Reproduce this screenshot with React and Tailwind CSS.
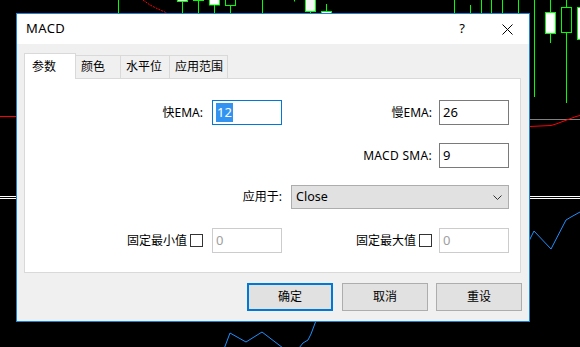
import React from 'react';

const font = "font-['Noto_Sans','Noto_Sans_CJK_SC',sans-serif]";

function ChartBackground() {
  const green = '#00ff00';
  return (
    <svg className="absolute inset-0" width="580" height="347" viewBox="0 0 580 347">
      <rect width="580" height="347" fill="#000" />
      {/* top strip */}
      <line x1="118.5" y1="0" x2="118.5" y2="14" stroke={green} />
      <path d="M143 0 L150 5 L158 9 L167 13" stroke="#ff0000" fill="none" strokeDasharray="2 1" />
      <line x1="182.5" y1="0" x2="182.5" y2="14" stroke={green} />
      <rect x="177.5" y="-2" width="10" height="3.5" fill="#fff" stroke={green} />
      <line x1="198.5" y1="0" x2="198.5" y2="14" stroke={green} />
      <line x1="193" y1="0.5" x2="204" y2="0.5" stroke={green} />
      <line x1="214.5" y1="0" x2="214.5" y2="14" stroke={green} />
      <rect x="209.5" y="-2" width="10" height="7" fill="#fff" stroke={green} />
      <line x1="230.5" y1="5" x2="230.5" y2="14" stroke={green} />
      <rect x="225.5" y="-2" width="10" height="7.5" fill="#000" stroke={green} />
      <line x1="262.5" y1="0" x2="262.5" y2="14" stroke={green} />
      <line x1="294.5" y1="0" x2="294.5" y2="1.5" stroke={green} />
      <line x1="310.5" y1="0" x2="310.5" y2="14" stroke={green} />
      <rect x="305.5" y="-2" width="10" height="13.5" fill="#f4f4f4" stroke={green} />
      <line x1="326.5" y1="4" x2="326.5" y2="12" stroke={green} />
      <rect x="321.5" y="11.5" width="10" height="4" fill="#fff" stroke={green} />
      <line x1="454.5" y1="0" x2="454.5" y2="14" stroke={green} />
      <line x1="470.5" y1="5" x2="470.5" y2="14" stroke={green} />
      <line x1="481.5" y1="0" x2="481.5" y2="14" stroke={green} />
      <line x1="491.5" y1="0" x2="491.5" y2="14" stroke={green} />
      <line x1="502.5" y1="0" x2="502.5" y2="14" stroke={green} />
      <line x1="518.5" y1="0" x2="518.5" y2="14" stroke={green} />
      {/* right strip */}
      <line x1="534.5" y1="0" x2="534.5" y2="97" stroke={green} />
      <line x1="550.5" y1="0" x2="550.5" y2="43" stroke={green} />
      <rect x="545.5" y="12.5" width="10" height="21" fill="#fff" stroke={green} />
      <line x1="566.5" y1="0" x2="566.5" y2="103" stroke={green} />
      <rect x="561.5" y="7.5" width="10" height="25" fill="#000" stroke={green} />
      <line x1="582.5" y1="0" x2="582.5" y2="50" stroke={green} />
      <rect x="577.5" y="7.5" width="10" height="32" fill="#fff" stroke={green} />
      <line x1="529" y1="119.5" x2="580" y2="119.5" stroke="#808080" />
      <path d="M529 126.5 L551 125.5 L556 124 L560 122.5 L564 121 L568 119.5 L572 118 L576 116.5 L580 115.5" stroke="#ff0000" fill="none" strokeWidth="1" />
      <line x1="0" y1="116.5" x2="17" y2="116.5" stroke="#ff0000" />
      <line x1="0" y1="196.5" x2="580" y2="196.5" stroke="#fff" />
      <line x1="0" y1="198.5" x2="580" y2="198.5" stroke="#fff" />
      <path d="M529 241 L534 231 L551 249 L566 220 L571 217 L580 212" stroke="#1e90ff" fill="none" />
      {/* bottom */}
      <path d="M224 349 L230 333 L246 342 L262 332 L283 348" stroke="#1e90ff" fill="none" />
      <path d="M299 348 L303 343 L308 340 L311 334 L317 318" stroke="#1e90ff" fill="none" />
    </svg>
  );
}

function TextBox({ value, focused, disabled }) {
  const border = focused ? 'border-[#0078d7]' : disabled ? 'border-[#cccccc]' : 'border-[#7a7a7a]';
  return (
    <div className={`w-[70px] h-[25px] border ${border} bg-white flex items-center pl-[3px] text-[13px] ${disabled ? 'text-[#a0a0a0]' : 'text-black'}`}>
      {focused ? <span className="bg-[#3393f0] text-white leading-[19px] px-px">{value}</span> : <span>{value}</span>}
    </div>
  );
}

function Checkbox() {
  return <span className="inline-block w-[13px] h-[13px] border border-[#333] bg-white ml-[3px]"></span>;
}

function Button({ children, primary, className = '' }) {
  return (
    <button
      className={`w-[86px] h-[28px] bg-[#e1e1e1] text-[12px] text-black flex items-center justify-center ${
        primary ? 'border-2 border-[#0078d7]' : 'border border-[#adadad]'
      } ${className}`}
    >
      {children}
    </button>
  );
}

export default function App() {
  return (
    <div className={`relative w-[580px] h-[347px] overflow-hidden bg-black ${font}`}>
      <ChartBackground />

      <div className="absolute left-[16px] top-[13px] w-[514px] h-[309px] border border-[#1883d7] bg-[#f0f0f0] flex flex-col">
        {/* title bar */}
        <div className="h-[30px] bg-white flex items-center text-black">
          <span className="pl-[9px] text-[13px] tracking-[0.4px]">MACD</span>
          <span className="ml-auto mr-[37px] text-[13px]">?</span>
          <svg width="11" height="11" viewBox="0 0 11 11" className="mr-[16px]">
            <path d="M0.5 0.5 L10.5 10.5 M10.5 0.5 L0.5 10.5" stroke="#000" strokeWidth="1" />
          </svg>
        </div>

        {/* body */}
        <div className="flex-1 pt-[9px] px-[7px] text-[12px] text-black">
          <div className="flex items-end h-[25px]">
            <div className="relative z-10 -mb-px h-[26px] w-[52px] bg-white border border-b-0 border-[#d9d9d9] flex items-center pl-[7px]">
              参数
            </div>
            <div className="-ml-px h-[23px] w-[46px] border border-b-0 border-[#d9d9d9] flex items-center pl-[5px]">颜色</div>
            <div className="-ml-px h-[23px] w-[50px] border border-b-0 border-[#d9d9d9] flex items-center pl-[5px]">水平位</div>
            <div className="-ml-px h-[23px] w-[59px] border border-b-0 border-[#d9d9d9] flex items-center pl-[5px]">应用范围</div>
          </div>

          <div className="w-[497px] h-[195px] bg-white border border-[#d9d9d9] pt-[21px]">
            <div className="flex items-center h-[25px]">
              <div className="w-[187px] flex justify-end pr-[9px]">快EMA:</div>
              <TextBox value="12" focused />
              <div className="w-[157px] flex justify-end pr-[7px]">慢EMA:</div>
              <TextBox value="26" />
            </div>

            <div className="flex items-center h-[25px] mt-[18px]">
              <div className="w-[414px] flex justify-end pr-[7px] tracking-[0.3px]">MACD SMA:</div>
              <TextBox value="9" />
            </div>

            <div className="flex items-center h-[24px] mt-[17px]">
              <div className="w-[266px] flex justify-end pr-[9px]">应用于:</div>
              <div className="w-[218px] h-[24px] bg-[#e1e1e1] border border-[#adadad] flex items-center pl-[4px] pr-[6px] text-[12.5px]">
                <span>Close</span>
                <svg width="9" height="5" viewBox="0 0 9 5" className="ml-auto">
                  <path d="M0.5 0.5 L4.5 4.5 L8.5 0.5" stroke="#333" fill="none" />
                </svg>
              </div>
            </div>

            <div className="flex items-center h-[25px] mt-[19px]">
              <div className="w-[187px] flex justify-end items-center pr-[9px]">
                固定最小值
                <Checkbox />
              </div>
              <TextBox value="0" disabled />
              <div className="w-[157px] flex justify-end items-center pr-[7px]">
                固定最大值
                <Checkbox />
              </div>
              <TextBox value="0" disabled />
            </div>
          </div>

          <div className="flex justify-end mt-[10px]">
            <Button primary>确定</Button>
            <Button className="ml-[9px]">取消</Button>
            <Button className="ml-[8px]">重设</Button>
          </div>
        </div>
      </div>
    </div>
  );
}
